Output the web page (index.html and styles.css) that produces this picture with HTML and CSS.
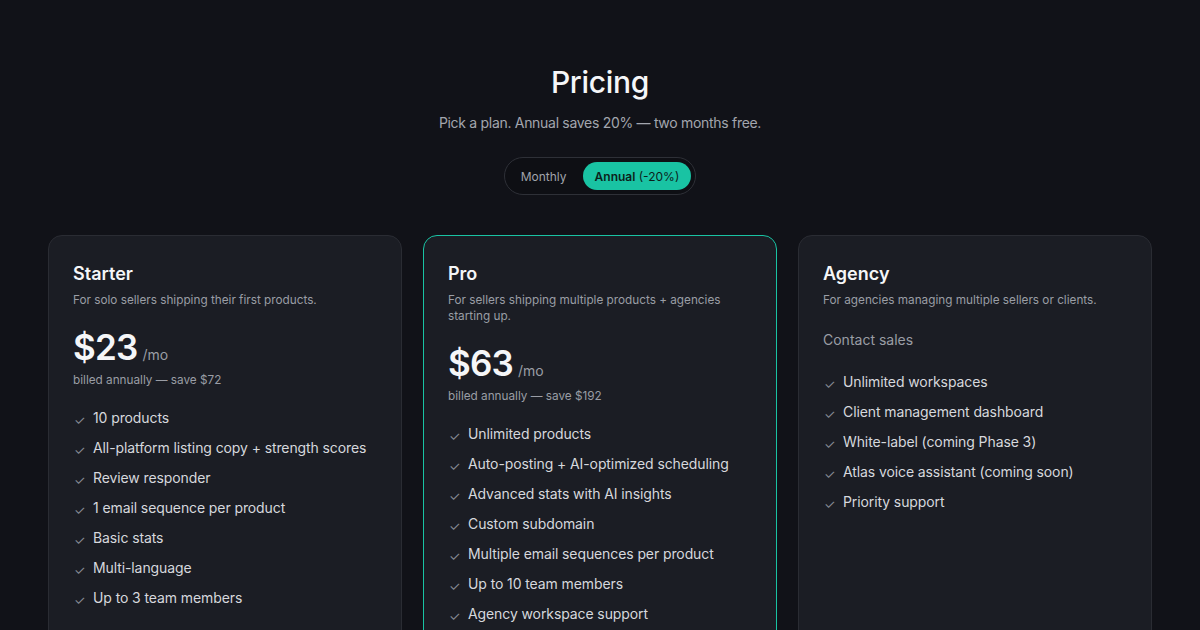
FILE: index.html
```html
<!DOCTYPE html>
<html lang="en">
<head>
<meta charset="utf-8">
<title>Pricing</title>
<link rel="stylesheet" href="styles.css">
</head>
<body>
<main class="pricing">
  <header class="pricing-head">
    <h1 class="pricing-title">Pricing</h1>
    <p class="pricing-sub">Pick a plan. Annual saves 20% — two months free.</p>
    <div class="billing-toggle">
      <button class="toggle-btn">Monthly</button>
      <button class="toggle-btn is-active"><strong>Annual</strong> (-20%)</button>
    </div>
  </header>

  <section class="plans">
    <article class="plan">
      <h2 class="plan-name">Starter</h2>
      <p class="plan-desc">For solo sellers shipping their first products.</p>
      <div class="plan-price"><span class="amount">$23</span><span class="per">/mo</span></div>
      <p class="plan-note">billed annually — save $72</p>
      <ul class="features">
        <li>10 products</li>
        <li>All-platform listing copy + strength scores</li>
        <li>Review responder</li>
        <li>1 email sequence per product</li>
        <li>Basic stats</li>
        <li>Multi-language</li>
        <li>Up to 3 team members</li>
      </ul>
    </article>

    <article class="plan plan-featured">
      <h2 class="plan-name">Pro</h2>
      <p class="plan-desc">For sellers shipping multiple products + agencies starting up.</p>
      <div class="plan-price"><span class="amount">$63</span><span class="per">/mo</span></div>
      <p class="plan-note">billed annually — save $192</p>
      <ul class="features">
        <li>Unlimited products</li>
        <li>Auto-posting + AI-optimized scheduling</li>
        <li>Advanced stats with AI insights</li>
        <li>Custom subdomain</li>
        <li>Multiple email sequences per product</li>
        <li>Up to 10 team members</li>
        <li>Agency workspace support</li>
      </ul>
    </article>

    <article class="plan">
      <h2 class="plan-name">Agency</h2>
      <p class="plan-desc">For agencies managing multiple sellers or clients.</p>
      <p class="plan-contact">Contact sales</p>
      <ul class="features">
        <li>Unlimited workspaces</li>
        <li>Client management dashboard</li>
        <li>White-label (coming Phase 3)</li>
        <li>Atlas voice assistant (coming soon)</li>
        <li>Priority support</li>
      </ul>
    </article>
  </section>
</main>
</body>
</html>
```

FILE: styles.css
```css
* {
  box-sizing: border-box;
}

html,
body {
  margin: 0;
  background: #111218;
  color: #f3f4f6;
  font-family: "Inter", "Noto Sans", "Liberation Sans", sans-serif;
}

.pricing {
  padding: 64px 48px 0;
}

.pricing-head {
  display: flex;
  flex-direction: column;
  align-items: center;
}

.pricing-title {
  margin: 0;
  font-size: 30px;
  line-height: 36px;
  font-weight: 500;
  letter-spacing: -0.3px;
  color: #f5f6f8;
}

.pricing-sub {
  margin: 13px 0 0;
  font-size: 14px;
  line-height: 20px;
  letter-spacing: -0.3px;
  color: #a3a6ae;
}

.billing-toggle {
  margin-top: 24px;
  display: flex;
  gap: 4px;
  padding: 4px;
  border: 1px solid #2e3037;
  border-radius: 999px;
  background: #0e0f14;
}

.toggle-btn {
  height: 28px;
  padding: 0 12px;
  border: 0;
  border-radius: 999px;
  background: transparent;
  color: #a0a3ab;
  font-family: inherit;
  font-size: 12px;
  cursor: pointer;
}

.toggle-btn.is-active {
  background: #19c3a3;
  color: #0c1f1b;
}

.toggle-btn strong {
  font-weight: 600;
}

.plans {
  margin-top: 40px;
  display: grid;
  grid-template-columns: repeat(3, 1fr);
  gap: 21px;
}

.plan {
  padding: 24px 24px 48px;
  border: 1px solid #2a2c33;
  border-radius: 14px;
  background: #1b1d24;
}

.plan-featured {
  border-color: #19c3a3;
}

.plan-name {
  margin: 0;
  font-size: 18px;
  line-height: 28px;
  font-weight: 600;
  color: #f5f6f8;
}

.plan-desc {
  margin: 4px 0 0;
  font-size: 11.75px;
  line-height: 16px;
  color: #9a9da5;
}

.plan-price {
  margin-top: 17px;
  display: flex;
  align-items: baseline;
  gap: 5px;
}

.amount {
  font-size: 35px;
  line-height: 44px;
  font-weight: 600;
  letter-spacing: -0.8px;
  color: #f5f6f8;
}

.per {
  font-size: 14px;
  color: #9a9da5;
}

.plan-note {
  margin: 3px 0 0;
  font-size: 11.75px;
  line-height: 16px;
  color: #9a9da5;
}

.plan-contact {
  margin: 22px 0 0;
  padding-bottom: 2px;
  font-size: 14px;
  line-height: 20px;
  color: #9a9da5;
}

.features {
  list-style: none;
  margin: 20px 0 0;
  padding: 0;
  display: flex;
  flex-direction: column;
  gap: 10px;
}

.features li {
  position: relative;
  padding-left: 20px;
  font-size: 14px;
  line-height: 20px;
  letter-spacing: -0.1px;
  color: #d6d8dd;
}

.features li::before {
  content: "✓";
  position: absolute;
  left: 1px;
  top: 2px;
  font-size: 13px;
  color: #868a93;
}
```
